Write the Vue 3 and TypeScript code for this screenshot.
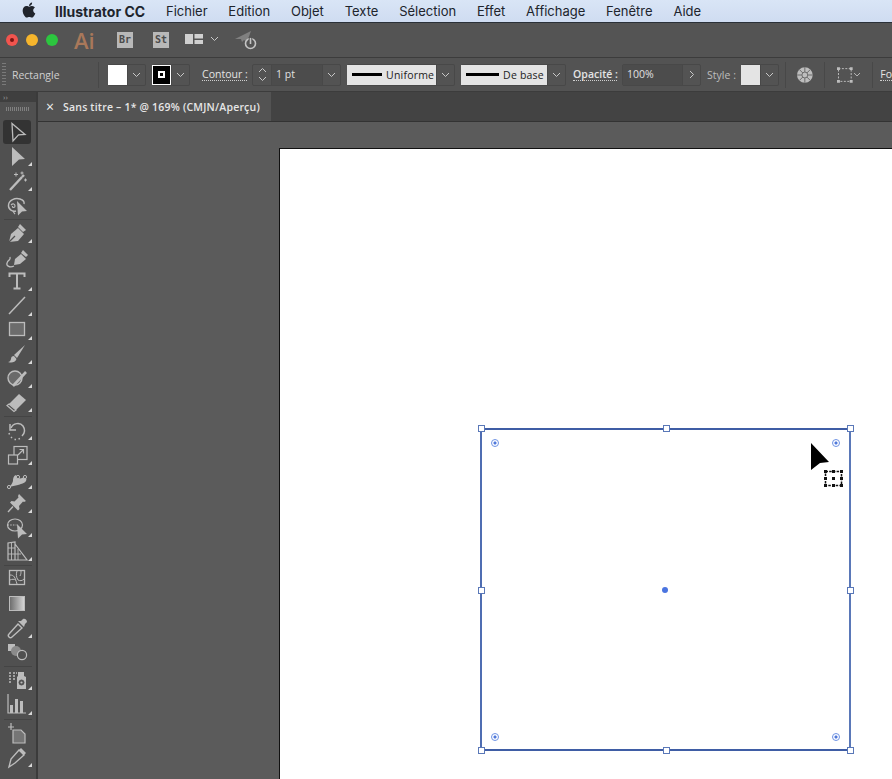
<script setup lang="ts">
interface Tool {
  svg: string;
  corner?: boolean;
  active?: boolean;
  sepAfter?: boolean;
}

const menus = ['Fichier', 'Edition', 'Objet', 'Texte', 'Sélection', 'Effet', 'Affichage', 'Fenêtre', 'Aide'];

const tools: Tool[] = [
  { active: true, svg: '<path d="M7 3.500 20 14.500l-6.500.4L8 21z" fill="none" stroke-width="1.300"/>' },
  { corner: true, svg: '<path d="M7 3 20 15l-6 .6L7 22z" class="f"/>' },
  { corner: true, svg: '<path d="M5 22 17 9" stroke-width="2.400"/><path d="M9 6.500h4M11 4.500v4M17 3.500v3M15.500 5h3M19 12h3M20.500 10.500v3" stroke-width="1"/><path d="M17 9l2-2" stroke-width="2.400"/>' },
  { sepAfter: true, svg: '<path d="M11 18c-4 1-8-2-7.500-6C4 7 10 4.500 15 6c3 1 4.500 3 4 5" fill="none" stroke-width="1.400"/><path d="M6 12c2-2 4-1 4 1s-3 2-2.500 0M8 18c.5 1 1 2 2 3" fill="none" stroke-width="1.200"/><path d="M12 8l10 10-5 .5-4 4z" class="f"/>' },
  { corner: true, svg: '<path d="M4 21l2-8 7-6 6 6-6 7z" class="f"/><path d="M13 6l2-3 6 6-3 2z" class="f"/><path d="M4 21l6-6" stroke="#505050" stroke-width="1.200"/>' },
  { svg: '<path d="M9 20l1-6 6-5 5 5-6 5z" class="f"/><path d="M16 8l2-3 5 5-2 2z" class="f"/><path d="M9 21c-4 2-8 0-7-3 1-4 4-2 3-6" fill="none" stroke-width="1.300"/>' },
  { corner: true, svg: '<path d="M4.500 8V4.500h15V8M12 4.500v15M8.500 19.500h7" fill="none" stroke-width="2"/>' },
  { corner: true, svg: '<path d="M4 21 20 4" stroke-width="1.500"/>' },
  { corner: true, svg: '<rect x="4.500" y="4.500" width="15" height="13" fill="#6c6c6c" stroke-width="1.300"/>' },
  { corner: true, svg: '<path d="M20 3 9 13l3 3z" class="f"/><path d="M9 14c-2 0-3 1-3 3-.5 2-1.500 3-3 3 3 1 7 1 8.500-3z" class="f"/>' },
  { corner: true, svg: '<circle cx="10" cy="12" r="7" fill="#6a6a6a" stroke-width="1.400"/><path d="M8 20 21 6" stroke-width="2.600"/>' },
  { corner: true, sepAfter: true, svg: '<path d="M4 14 14 4l7 6-10 10z" class="f"/><path d="M4 14l7 6-2 1.500-7-6z" fill="none" stroke-width="1.200"/>' },
  { corner: true, svg: '<path d="M5 6v6h6" fill="none" stroke-width="1.500"/><path d="M6 10c2-5 9-6 12-2 2 3 2 7-1 10" fill="none" stroke-width="1.500"/><path d="M15 20.500l-1.500.5M11 21.500H9.500M7 20l-1-1M4.500 16.500 4 15" stroke-width="1.500"/>' },
  { corner: true, svg: '<rect x="9" y="3.500" width="13" height="13" fill="none" stroke-width="1.200"/><rect x="3.500" y="12" width="9" height="9" fill="#505050" stroke-width="1.200"/><path d="M13 12l5-5M14.500 6.500H18.500V10.500" fill="none" stroke-width="1.200"/>' },
  { corner: true, svg: '<path d="M4 20c2-2 3-3 4-6 0-4 2-7 4-5 2 3 4 3 7 1 2 0 3 2 2 4-2 3-6 3-8 4-3 1-6 1-9 2z" class="f"/><circle cx="4" cy="20" r="1.600" fill="#505050" stroke-width="1"/><circle cx="13" cy="10" r="1.600" fill="#505050" stroke-width="1"/><circle cx="20" cy="10" r="1.600" fill="#505050" stroke-width="1"/>' },
  { corner: true, svg: '<path d="M14 3 21 10l-2 1-1-.5-4 4.500.5 3-1.500 1.500-8-8L6.500 10l3 .5 4-4L13 5z" class="f"/><path d="M8 15.500 3 21" stroke-width="1.400"/>' },
  { corner: true, svg: '<ellipse cx="10" cy="10" rx="7.500" ry="6" fill="none" stroke-width="1.200"/><path d="M2.500 10h9" stroke-width="1.200" stroke-dasharray="1.500 1.200"/><path d="M12 9l10 10-5 .5-4 4z" class="f"/>' },
  { corner: true, sepAfter: true, svg: '<path d="M3 21V4l7-1v18zM10 21 22 21 10 5" fill="none" stroke-width="1.200"/><path d="M3 15h13M3 9h7M6.500 4v17M13 10v11" stroke-width=".9"/>' },
  { svg: '<rect x="4.500" y="3.500" width="15" height="14" fill="none" stroke-width="1.300"/><path d="M5 8c4 0 5 2 7 9M12 4c-1 3-1 6 1 9 2 1 4 1 6-1M5 13c2-1 4-1 6 0M16 4c0 2 0 3-1 5" fill="none" stroke-width="1"/>' },
  { svg: '<rect x="4.500" y="4.500" width="15" height="14" fill="url(#grad)" stroke-width="1"/>' },
  { corner: true, svg: '<path d="M4 21c-1-1-1-2 0-3l9-10 4 4-10 9c-1 1-2 1-3 0z" fill="none" stroke-width="1.400"/><path d="M13 5l6 6 1-3 2-2c0-2-2-4-4-3l-2 2z" class="f"/>' },
  { sepAfter: true, svg: '<rect x="3" y="4" width="7" height="7" class="f"/><circle cx="11" cy="11" r="5" fill="#8a8a8a" stroke="none"/><circle cx="17" cy="15" r="4.600" fill="#505050" stroke-width="1.200"/>' },
  { corner: true, svg: '<path d="M4 8h2M8 8h2M4 11h2M8 11h2M4 14h2M4 5h2M8 5h2M11 5h1" stroke-width="1.500"/><path d="M13 8V4h6v4l2 1v12H12V9z" class="f"/><circle cx="16.500" cy="14.500" r="2.500" fill="#505050" stroke="#505050"/><circle cx="16.500" cy="14.500" r="1.100" class="f"/>' },
  { corner: true, sepAfter: true, svg: '<path d="M3 2v19h18" fill="none" stroke-width="1.200" /><rect x="5" y="13" width="3" height="8" class="f"/><rect x="10" y="7" width="3" height="14" class="f"/><rect x="15" y="9" width="3" height="12" class="f"/>' },
  { svg: '<path d="M3 6h6M6 2v7" stroke-width="1.200"/><path d="M8 9h8l4 4v9H8z" fill="#757575" stroke-width="1.200"/>' },
  { corner: true, svg: '<path d="M4 22l2-8 8-9 5 5-9 8z" fill="none" stroke-width="1.400"/><path d="M14 5l2-2 5 5-2 2z" class="f"/>' },
  { svg: '<path d="M7 24v-9M10.500 24V11M14 24V11M17.500 24v-9" stroke-width="2.600"/>' },
];
</script>

<template>
  <div class="screen">
    <header class="menubar">
      <svg class="apple" viewBox="0 0 24 24"><path d="M17.050 20.280c-.98.95-2.050.8-3.080.35-1.090-.46-2.090-.48-3.240 0-1.440.62-2.200.44-3.060-.35C2.790 15.250 3.510 7.590 9.050 7.310c1.350.07 2.290.74 3.080.8 1.180-.24 2.310-.93 3.570-.84 1.510.12 2.650.72 3.400 1.800-3.120 1.870-2.380 5.980.48 7.130-.57 1.500-1.310 2.990-2.540 4.090zM12.030 7.250c-.15-2.230 1.660-4.070 3.740-4.250.29 2.580-2.340 4.500-3.740 4.250z" /></svg>
      <span class="app-name">Illustrator CC</span>
      <span v-for="m in menus" :key="m" class="menu">{{ m }}</span>
    </header>

    <div class="appbar">
      <span class="light red"><i></i></span>
      <span class="light yellow"></span>
      <span class="light green"></span>
      <span class="ai">Ai</span>
      <span class="badge br">Br</span>
      <span class="badge st">St</span>
      <svg class="workspace" width="18" height="12" viewBox="0 0 18 12"><path d="M0 1h8v10H0zM9.500 1H18v4.500H9.500zM9.500 7H18v4H9.500z" fill="#d0d0d0" /></svg>
      <svg class="chev wk-chev" width="9" height="6" viewBox="0 0 9 6"><path d="M1 1l3.500 3.500L8 1" /></svg>
      <svg class="rocket" width="24" height="22" viewBox="0 0 24 22">
        <path d="M0 9 16 1l-4 11-3-2-2 2-1-3z" fill="#808080" />
        <circle cx="15.500" cy="13.500" r="5" fill="none" stroke="#c4c4c4" stroke-width="1.600" />
        <path d="M15.500 7.500v6" stroke="#535353" stroke-width="3.500" />
        <path d="M15.500 8v6" stroke="#c4c4c4" stroke-width="1.600" />
      </svg>
    </div>

    <div class="controlbar">
      <span class="grip"></span>
      <span class="tool-name">Rectangle</span>
      <span class="rule rule-a"></span>

      <span class="combo fill-combo">
        <span class="swatch white"></span>
        <span class="drop"><svg class="chev" width="9" height="6" viewBox="0 0 9 6"><path d="M1 1l3.500 3.500L8 1" /></svg></span>
      </span>
      <span class="combo stroke-combo">
        <span class="swatch stroke-swatch"><i></i></span>
        <span class="drop"><svg class="chev" width="9" height="6" viewBox="0 0 9 6"><path d="M1 1l3.500 3.500L8 1" /></svg></span>
      </span>

      <span class="label contour">Contour :</span>
      <span class="combo weight">
        <span class="spin">
          <svg class="chev" width="9" height="6" viewBox="0 0 9 6"><path d="M1 5l3.500-3.500L8 5" /></svg>
          <svg class="chev" width="9" height="6" viewBox="0 0 9 6"><path d="M1 1l3.500 3.500L8 1" /></svg>
        </span>
        <span class="value weight-value">1 pt</span>
        <span class="drop"><svg class="chev" width="9" height="6" viewBox="0 0 9 6"><path d="M1 1l3.500 3.500L8 1" /></svg></span>
      </span>

      <span class="combo profile uniform">
        <span class="line-box"><i></i><b>Uniforme</b></span>
        <span class="drop"><svg class="chev" width="9" height="6" viewBox="0 0 9 6"><path d="M1 1l3.500 3.500L8 1" /></svg></span>
      </span>
      <span class="combo profile base">
        <span class="line-box"><i></i><b>De base</b></span>
        <span class="drop"><svg class="chev" width="9" height="6" viewBox="0 0 9 6"><path d="M1 1l3.500 3.500L8 1" /></svg></span>
      </span>

      <span class="label opacity">Opacité :</span>
      <span class="combo opacity-combo">
        <span class="value opacity-value">100%</span>
        <span class="drop"><svg class="chev" width="6" height="9" viewBox="0 0 6 9"><path d="M1 1l3.500 3.500L1 8" /></svg></span>
      </span>

      <span class="label style-label">Style :</span>
      <span class="combo style-combo">
        <span class="swatch light-swatch"></span>
        <span class="drop"><svg class="chev" width="9" height="6" viewBox="0 0 9 6"><path d="M1 1l3.500 3.500L8 1" /></svg></span>
      </span>

      <span class="rule rule-b"></span>
      <svg class="globe" width="16" height="16" viewBox="0 0 16 16">
        <circle cx="8" cy="8" r="8" fill="#bdbdbd" />
        <path d="M8 0v5M8 11v5M0 8h5M11 8h5M2.300 2.300 6 6M10 10l3.700 3.700M13.700 2.300 10 6M6 10l-3.700 3.700" stroke="#6a6a6a" stroke-width="1" />
        <circle cx="8" cy="8" r="3" fill="none" stroke="#6a6a6a" />
      </svg>
      <span class="rule rule-c"></span>
      <svg class="transform" width="24" height="16" viewBox="0 0 24 16">
        <rect x="1.500" y="1.500" width="13" height="13" fill="none" stroke="#bdbdbd" stroke-dasharray="2 1.500" />
        <path d="M0 0h3v3H0zM13 0h3v3h-3zM0 13h3v3H0zM13 13h3v3h-3z" fill="#bdbdbd" />
        <path d="M17.500 6l3 3 3-3" fill="none" stroke="#bdbdbd" />
      </svg>
      <span class="rule rule-d"></span>
      <span class="label font-label">Fo</span>
    </div>

    <div class="workspace-row">
      <aside class="tools">
        <div class="tools-head">››</div>
        <div class="tools-grip"></div>
        <template v-for="(t, i) in tools" :key="i">
          <div class="tool" :class="{ active: t.active }">
            <svg width="24" height="24" viewBox="0 0 24 24" v-html="t.svg"></svg>
            <span v-if="t.corner" class="corner"></span>
          </div>
          <div v-if="t.sepAfter" class="tool-sep"></div>
        </template>
        <svg width="0" height="0" class="defs">
          <defs>
            <linearGradient id="grad"><stop offset="0" stop-color="#6a6a6a" /><stop offset="1" stop-color="#d8d8d8" /></linearGradient>
          </defs>
        </svg>
      </aside>

      <main class="doc">
        <div class="tabs">
          <div class="tab">
            <span class="tab-close">×</span>
            <span class="tab-title">Sans titre – 1* @ 169% (CMJN/Aperçu)</span>
          </div>
        </div>
        <div class="canvas">
          <div class="artboard">
            <div class="selection">
              <span class="handle h-tl"></span>
              <span class="handle h-tc"></span>
              <span class="handle h-tr"></span>
              <span class="handle h-ml"></span>
              <span class="handle h-mr"></span>
              <span class="handle h-bl"></span>
              <span class="handle h-bc"></span>
              <span class="handle h-br"></span>
              <span class="radius r-tl"></span>
              <span class="radius r-tr"></span>
              <span class="radius r-bl"></span>
              <span class="radius r-br"></span>
              <span class="center-dot"></span>
            </div>
            <svg class="cursor" width="38" height="48" viewBox="0 0 38 48">
              <path d="M1 0 19 19 10 20 1 27z" fill="#000" />
              <rect x="15.500" y="28.500" width="16" height="14" fill="none" stroke="#111" stroke-width="1.500" stroke-dasharray="2.500 1.200" />
              <path d="M14 27h3v3h-3zM22 27h3v3h-3zM30 27h3v3h-3zM14 34h3v3h-3zM30 34h3v3h-3zM14 41h3v3h-3zM22 41h3v3h-3zM30 41h3v3h-3zM22 34h3v3h-3z" fill="#111" />
            </svg>
          </div>
        </div>
      </main>
    </div>
  </div>
</template>

<style>
html,
body {
  margin: 0;
  background: #5a5a5a;
  overflow: hidden;
}
</style>

<style scoped>
.screen {
  width: 892px;
  height: 779px;
  display: flex;
  flex-direction: column;
  overflow: hidden;
  font-family: "Open Sans", "Liberation Sans", sans-serif;
}

.menubar {
  height: 22px;
  flex: none;
  display: flex;
  align-items: center;
  padding-left: 21px;
  background: linear-gradient(#d9e5f6, #cfdcf1);
  border-bottom: 1px solid #2a3038;
  font-family: Inter, "Liberation Sans", sans-serif;
  font-size: 13px;
  color: #20242c;
}
.apple {
  width: 20px;
  height: 20px;
  margin: -2px 0 0 -2.500px;
  fill: #20242c;
  flex: none;
}
.app-name {
  font-weight: 700;
  font-size: 14px;
  margin-left: 16.500px;
  width: 111px;
  white-space: nowrap;
}
.menu {
  margin-right: 20.800px;
}

.appbar {
  height: 34px;
  flex: none;
  display: flex;
  align-items: center;
  background: #545454;
  border-bottom: 1px solid #3c3c3c;
  position: relative;
}
.light {
  width: 12px;
  height: 12px;
  border-radius: 50%;
  margin-right: 8px;
  display: flex;
  align-items: center;
  justify-content: center;
}
.light i {
  width: 4px;
  height: 4px;
  border-radius: 50%;
  background: #7a1512;
}
.red {
  background: #f2544e;
  margin-left: 6px;
}
.yellow {
  background: #f6b52c;
}
.green {
  background: #2cc63f;
}
.ai {
  margin-left: 8px;
  width: 43px;
  font-family: "Open Sans", sans-serif;
  font-weight: 600;
  font-size: 22px;
  color: #a9785a;
}
.badge {
  width: 16px;
  height: 16px;
  background: #b8b8b8;
  color: #4b4b4b;
  font-family: "DejaVu Sans Mono", monospace;
  font-weight: 700;
  font-size: 10px;
  line-height: 16px;
  text-align: center;
}
.st {
  margin-left: 20px;
}
.workspace {
  margin: 0 0 3px 16px;
}
.chev {
  fill: none;
  stroke: #c8c8c8;
  stroke-width: 1;
  display: block;
}
.wk-chev {
  margin: 0 0 3px 7px;
}
.rocket {
  margin: 2px 0 0 16px;
}

.controlbar {
  height: 33px;
  flex: none;
  display: flex;
  align-items: center;
  background: #535353;
  border-bottom: 1px solid #3c3c3c;
  font-size: 10.500px;
  color: #dadada;
  position: relative;
}
.grip {
  width: 4px;
  height: 24px;
  margin-left: 2px;
  background: repeating-linear-gradient(#7a7a7a 0 1px, transparent 1px 3px);
}
.tool-name {
  margin-left: 6px;
  width: 88px;
  color: #cfcfcf;
  font-weight: 400;
}
.rule {
  width: 1px;
  height: 26px;
  background: #484848;
  flex: none;
}
.rule-a {
  margin-right: 9px;
}
.combo {
  display: flex;
  height: 20px;
  border: 1px solid #484848;
  border-left: none;
  border-radius: 2px;
  align-items: stretch;
  flex: none;
}
.swatch {
  display: block;
  width: 19px;
}
.white {
  background: #fff;
}
.drop {
  width: 18px;
  display: flex;
  align-items: center;
  justify-content: center;
  border-left: 1px solid #484848;
  box-sizing: border-box;
}
.stroke-combo {
  margin-left: 6px;
}
.stroke-swatch {
  background: #000;
  border: 1px solid #fff;
  box-sizing: border-box;
  display: flex;
  align-items: center;
  justify-content: center;
}
.stroke-swatch i {
  width: 7px;
  height: 7px;
  border: 2px solid #fff;
  box-sizing: border-box;
}
.label {
  color: #e4e4e4;
  border-bottom: 1px dotted #cfcfcf;
  line-height: 12px;
  flex: none;
}
.contour {
  margin-left: 12px;
  width: 45px;
  white-space: nowrap;
}
.weight {
  margin-left: 5px;
  border-left: 1px solid #484848;
}
.spin {
  width: 18px;
  display: flex;
  flex-direction: column;
  align-items: center;
  justify-content: center;
  gap: 3px;
  border-right: 1px solid #484848;
}
.value {
  display: block;
  line-height: 19px;
  padding-left: 4px;
  box-sizing: border-box;
  color: #e0e0e0;
  background: #4c4c4c;
}
.weight-value {
  width: 50px;
}
.profile {
  margin-left: 6px;
  color: #222;
}
.line-box {
  display: flex;
  align-items: center;
  background: #e4e4e4;
  padding-left: 5px;
  box-sizing: border-box;
}
.line-box i {
  width: 30px;
  height: 2.500px;
  background: #000;
  margin-right: 4px;
}
.line-box b {
  font-weight: 400;
  letter-spacing: 0.200px;
}
.uniform .line-box {
  width: 89px;
}
.base .line-box {
  width: 86px;
}
.base .line-box i {
  width: 33px;
}
.opacity {
  margin-left: 7px;
  width: 44px;
  white-space: nowrap;
  font-weight: 600;
}
.opacity-combo {
  margin-left: 5px;
  border-left: 1px solid #484848;
}
.opacity-value {
  width: 59px;
}
.style-label {
  margin-left: 6px;
  width: 34px;
  border: none;
  color: #bdbdbd;
  white-space: nowrap;
}
.light-swatch {
  background: #e4e4e4;
}
.rule-b {
  margin-left: 6px;
}
.globe {
  margin-left: 11px;
}
.rule-c {
  margin-left: 11px;
}
.transform {
  margin-left: 12px;
}
.rule-d {
  margin-left: 12px;
}
.font-label {
  margin-left: 7px;
}

.workspace-row {
  flex: 1;
  display: flex;
  min-height: 0;
}
.tools {
  width: 36px;
  flex: none;
  background: #505050;
  border-right: 2px solid #3b3b3b;
  overflow: hidden;
}
.tools-head {
  height: 10px;
  background: #3f3f3f;
  color: #9a9a9a;
  font-size: 8px;
  line-height: 10px;
  padding-left: 3px;
}
.tools-grip {
  height: 4px;
  margin: 5px 6px 0;
  background: repeating-linear-gradient(90deg, #808080 0 1px, transparent 1px 2px);
}
.tool {
  height: 24.200px;
  margin-left: 3px;
  width: 28px;
  position: relative;
  display: flex;
  align-items: center;
  justify-content: center;
  stroke: #bcbcbc;
  stroke-linecap: butt;
}
.tools-grip + .tool {
  margin-top: 9px;
}
.tool.active {
  background: #333;
  border-radius: 3px;
}
.tool :deep(.f) {
  fill: #bcbcbc;
  stroke: none;
}
.corner {
  position: absolute;
  right: -1px;
  bottom: 2px;
  width: 0;
  height: 0;
  border-left: 4px solid transparent;
  border-bottom: 4px solid #d8d8d8;
}
.tool-sep {
  height: 1px;
  margin: 2px 4px 1px;
  background: #444;
}
.defs {
  position: absolute;
}

.doc {
  flex: 1;
  min-width: 0;
  display: flex;
  flex-direction: column;
}
.tabs {
  height: 29px;
  flex: none;
  background: #434343;
  border-bottom: 1px solid #333;
}
.tab {
  width: 233px;
  height: 29px;
  padding-left: 8px;
  box-sizing: border-box;
  background: #535353;
  display: flex;
  align-items: center;
  color: #e6e6e6;
  font-size: 10.500px;
  font-weight: 600;
  letter-spacing: 0.200px;
  white-space: nowrap;
}
.tab-close {
  width: 17px;
  font-size: 14px;
  font-weight: 400;
  color: #f0f0f0;
}
.canvas {
  flex: 1;
  min-height: 0;
  padding: 26px 0 0 241px;
  background: #5b5b5b;
  display: flex;
}
.artboard {
  flex: 1;
  background: #fff;
  border-top: 1px solid #111;
  border-left: 1px solid #111;
  position: relative;
}
.selection {
  position: absolute;
  left: 200px;
  top: 279px;
  width: 367px;
  height: 319px;
  border: 2px solid #3f5da5;
  border-left-color: #4f6db2;
  border-right-color: #5a78b8;
}
.handle {
  position: absolute;
  width: 5px;
  height: 5px;
  background: #fff;
  border: 1px solid #5a78b8;
}
.h-tl,
.h-tc,
.h-tr {
  top: -5px;
}
.h-bl,
.h-bc,
.h-br {
  bottom: -5px;
}
.h-ml,
.h-mr {
  top: calc(50% - 3px);
}
.h-tl,
.h-ml,
.h-bl {
  left: -4px;
}
.h-tr,
.h-mr,
.h-br {
  right: -5px;
}
.h-tc,
.h-bc {
  left: calc(50% - 3px);
}
.radius {
  position: absolute;
  width: 6px;
  height: 6px;
  border: 1px solid #6f93e4;
  border-radius: 50%;
  background: radial-gradient(circle, #4f78da 0 1.300px, #fff 1.800px);
}
.r-tl {
  left: 9px;
  top: 9px;
}
.r-tr {
  right: 9px;
  top: 9px;
}
.r-bl {
  left: 9px;
  bottom: 8px;
}
.r-br {
  right: 9px;
  bottom: 8px;
}
.center-dot {
  position: absolute;
  left: calc(50% - 4px);
  top: calc(50% - 3px);
  width: 6px;
  height: 6px;
  border-radius: 50%;
  background: #4a74e0;
}
.cursor {
  position: absolute;
  left: 530px;
  top: 294px;
}
</style>
